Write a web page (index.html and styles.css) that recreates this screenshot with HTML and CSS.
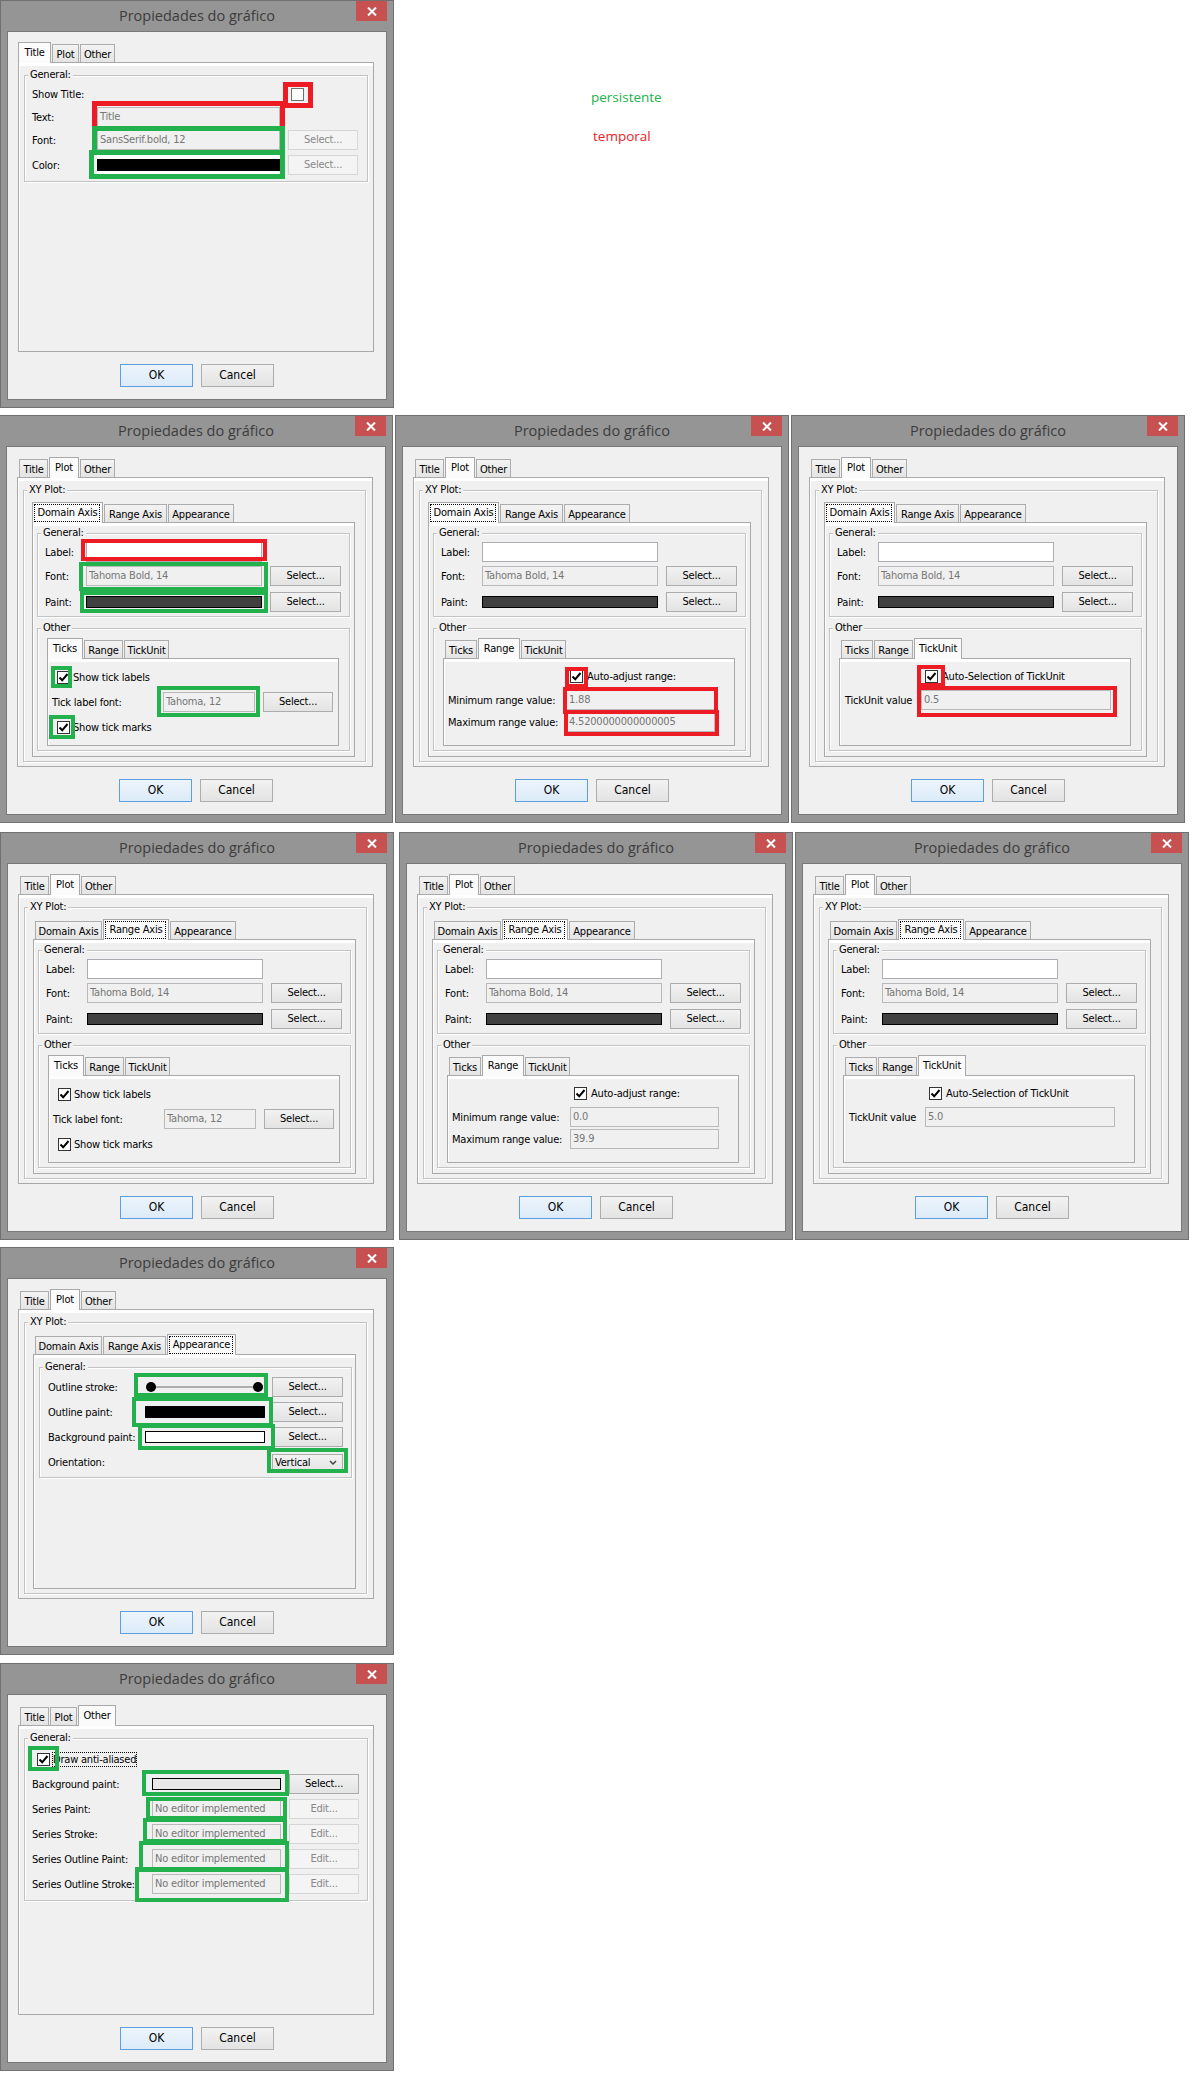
FILE: index.html
```html
<!DOCTYPE html>
<html lang="es">
<head>
<meta charset="utf-8">
<title>Propiedades do gráfico</title>
<link rel="stylesheet" href="styles.css">
</head>
<body>
<div class="page">

<!-- ROW 1 -->
<div class="row">
 <div class="dlg">
  <div class="bar">Propiedades do gráfico</div>
  <div class="close"><svg width="10" height="9" viewBox="0 0 10 9"><path d="M1 0.5L9 8.5M9 0.5L1 8.5" stroke="#fff" stroke-width="2"/></svg></div>
  <div class="client">
   <div class="tabs"><div class="tab w-title sel">Title</div><div class="tab w-plot">Plot</div><div class="tab w-other">Other</div></div>
   <div class="panel">
    <div class="grp g-t"><span class="gt">General:</span>
     <div class="fr mt8"><span class="lb">Show Title:</span><span class="fc"></span><span class="bc"><span class="cb off ml3"></span></span></div>
     <div class="fr h21 mt3"><span class="lb">Text:</span><span class="fc"><span class="tf">Title</span></span></div>
     <div class="fr mt2"><span class="lb">Font:</span><span class="fc"><span class="tf">SansSerif.bold, 12</span></span><span class="bc"><span class="btn dis">Select...</span></span></div>
     <div class="fr mt5"><span class="lb">Color:</span><span class="fc wbg"><span class="sw bk"></span></span><span class="bc"><span class="btn dis">Select...</span></span></div>
    </div>
   </div>
   <div class="btns"><span class="ok">OK</span><span class="cancel">Cancel</span></div>
   <div class="ann red t5 d1a"></div>
   <div class="ann red t5 d1b"></div>
   <div class="ann grn t5 d1c"></div>
   <div class="ann grn t5 d1d"></div>
  </div>
 </div>
 <div class="legend">
  <div class="leg-g">persistente</div>
  <div class="leg-r">temporal</div>
 </div>
</div>

<!-- ROW 2 -->
<div class="row row2">
 <!-- D2 -->
 <div class="dlg">
  <div class="bar">Propiedades do gráfico</div>
  <div class="close"><svg width="10" height="9" viewBox="0 0 10 9"><path d="M1 0.5L9 8.5M9 0.5L1 8.5" stroke="#fff" stroke-width="2"/></svg></div>
  <div class="client">
   <div class="tabs"><div class="tab w-title">Title</div><div class="tab w-plot sel">Plot</div><div class="tab w-other">Other</div></div>
   <div class="panel">
    <div class="grp g-xy"><span class="gt">XY Plot:</span>
     <div class="tabs"><div class="tab w-dom sel focus">Domain Axis</div><div class="tab w-rng">Range Axis</div><div class="tab w-app">Appearance</div></div>
     <div class="ipanel">
      <div class="grp g-gen2"><span class="gt">General:</span>
       <div class="fr mt8"><span class="lb">Label:</span><span class="fc"><span class="tf en"></span></span></div>
       <div class="fr mt4"><span class="lb">Font:</span><span class="fc"><span class="tf">Tahoma Bold, 14</span></span><span class="bc"><span class="btn">Select...</span></span></div>
       <div class="fr mt6"><span class="lb">Paint:</span><span class="fc"><span class="sw dk"></span></span><span class="bc"><span class="btn">Select...</span></span></div>
      </div>
      <div class="grp g-oth"><span class="gt">Other</span>
       <div class="tabs"><div class="tab w-ticks sel">Ticks</div><div class="tab w-range">Range</div><div class="tab w-tu">TickUnit</div></div>
       <div class="spanel sp-ticks">
        <div class="fr mt8"><span class="cb ml5"><svg width="11" height="11" viewBox="0 0 11 11"><path d="M1.5 5.5L4.2 8.3L9.5 2" fill="none" stroke="#000" stroke-width="2"/></svg></span><span class="cbl">Show tick labels</span></div>
        <div class="fr mt5"><span class="lb">Tick label font:</span><span class="fc"><span class="tf">Tahoma, 12</span></span><span class="bc"><span class="btn">Select...</span></span></div>
        <div class="fr mt5"><span class="cb ml5"><svg width="11" height="11" viewBox="0 0 11 11"><path d="M1.5 5.5L4.2 8.3L9.5 2" fill="none" stroke="#000" stroke-width="2"/></svg></span><span class="cbl">Show tick marks</span></div>
       </div>
      </div>
     </div>
    </div>
   </div>
   <div class="btns"><span class="ok">OK</span><span class="cancel">Cancel</span></div>
   <div class="ann red d2a"></div>
   <div class="ann grn d2b"></div>
   <div class="ann grn d2c"></div>
   <div class="ann grn d2d"></div>
   <div class="ann grn d2e"></div>
   <div class="ann grn d2f"></div>
  </div>
 </div>
 <!-- D3 -->
 <div class="dlg">
  <div class="bar">Propiedades do gráfico</div>
  <div class="close"><svg width="10" height="9" viewBox="0 0 10 9"><path d="M1 0.5L9 8.5M9 0.5L1 8.5" stroke="#fff" stroke-width="2"/></svg></div>
  <div class="client">
   <div class="tabs"><div class="tab w-title">Title</div><div class="tab w-plot sel">Plot</div><div class="tab w-other">Other</div></div>
   <div class="panel">
    <div class="grp g-xy"><span class="gt">XY Plot:</span>
     <div class="tabs"><div class="tab w-dom sel focus">Domain Axis</div><div class="tab w-rng">Range Axis</div><div class="tab w-app">Appearance</div></div>
     <div class="ipanel">
      <div class="grp g-gen2"><span class="gt">General:</span>
       <div class="fr mt8"><span class="lb">Label:</span><span class="fc"><span class="tf en"></span></span></div>
       <div class="fr mt4"><span class="lb">Font:</span><span class="fc"><span class="tf">Tahoma Bold, 14</span></span><span class="bc"><span class="btn">Select...</span></span></div>
       <div class="fr mt6"><span class="lb">Paint:</span><span class="fc"><span class="sw dk"></span></span><span class="bc"><span class="btn">Select...</span></span></div>
      </div>
      <div class="grp g-oth"><span class="gt">Other</span>
       <div class="tabs"><div class="tab w-ticks">Ticks</div><div class="tab w-range sel">Range</div><div class="tab w-tu">TickUnit</div></div>
       <div class="spanel sp-range">
        <div class="fr mt7"><span class="lb"></span><span class="cb ml4"><svg width="11" height="11" viewBox="0 0 11 11"><path d="M1.5 5.5L4.2 8.3L9.5 2" fill="none" stroke="#000" stroke-width="2"/></svg></span><span class="cbl ml4">Auto-adjust range:</span></div>
        <div class="fr mt4"><span class="lb">Minimum range value:</span><span class="fc"><span class="tf">1.88</span></span></div>
        <div class="fr mt2"><span class="lb">Maximum range value:</span><span class="fc"><span class="tf">4.5200000000000005</span></span></div>
       </div>
      </div>
     </div>
    </div>
   </div>
   <div class="btns"><span class="ok">OK</span><span class="cancel">Cancel</span></div>
   <div class="ann red d3a"></div>
   <div class="ann red d3b"></div>
   <div class="ann red d3c"></div>
  </div>
 </div>
 <!-- D4 -->
 <div class="dlg">
  <div class="bar">Propiedades do gráfico</div>
  <div class="close"><svg width="10" height="9" viewBox="0 0 10 9"><path d="M1 0.5L9 8.5M9 0.5L1 8.5" stroke="#fff" stroke-width="2"/></svg></div>
  <div class="client">
   <div class="tabs"><div class="tab w-title">Title</div><div class="tab w-plot sel">Plot</div><div class="tab w-other">Other</div></div>
   <div class="panel">
    <div class="grp g-xy"><span class="gt">XY Plot:</span>
     <div class="tabs"><div class="tab w-dom sel focus">Domain Axis</div><div class="tab w-rng">Range Axis</div><div class="tab w-app">Appearance</div></div>
     <div class="ipanel">
      <div class="grp g-gen2"><span class="gt">General:</span>
       <div class="fr mt8"><span class="lb">Label:</span><span class="fc"><span class="tf en"></span></span></div>
       <div class="fr mt4"><span class="lb">Font:</span><span class="fc"><span class="tf">Tahoma Bold, 14</span></span><span class="bc"><span class="btn">Select...</span></span></div>
       <div class="fr mt6"><span class="lb">Paint:</span><span class="fc"><span class="sw dk"></span></span><span class="bc"><span class="btn">Select...</span></span></div>
      </div>
      <div class="grp g-oth"><span class="gt">Other</span>
       <div class="tabs"><div class="tab w-ticks">Ticks</div><div class="tab w-range">Range</div><div class="tab w-tu sel">TickUnit</div></div>
       <div class="spanel sp-tu">
        <div class="fr mt7"><span class="lb"></span><span class="cb ml4"><svg width="11" height="11" viewBox="0 0 11 11"><path d="M1.5 5.5L4.2 8.3L9.5 2" fill="none" stroke="#000" stroke-width="2"/></svg></span><span class="cbl ml4">Auto-Selection of TickUnit</span></div>
        <div class="fr mt4"><span class="lb">TickUnit value</span><span class="fc"><span class="tf">0.5</span></span></div>
       </div>
      </div>
     </div>
    </div>
   </div>
   <div class="btns"><span class="ok">OK</span><span class="cancel">Cancel</span></div>
   <div class="ann red d4a"></div>
   <div class="ann red d4b"></div>
  </div>
 </div>
</div>

<!-- ROW 3 -->
<div class="row row3">
 <!-- D5 -->
 <div class="dlg">
  <div class="bar">Propiedades do gráfico</div>
  <div class="close"><svg width="10" height="9" viewBox="0 0 10 9"><path d="M1 0.5L9 8.5M9 0.5L1 8.5" stroke="#fff" stroke-width="2"/></svg></div>
  <div class="client">
   <div class="tabs"><div class="tab w-title">Title</div><div class="tab w-plot sel">Plot</div><div class="tab w-other">Other</div></div>
   <div class="panel">
    <div class="grp g-xy"><span class="gt">XY Plot:</span>
     <div class="tabs"><div class="tab w-dom">Domain Axis</div><div class="tab w-rng sel focus">Range Axis</div><div class="tab w-app">Appearance</div></div>
     <div class="ipanel">
      <div class="grp g-gen2"><span class="gt">General:</span>
       <div class="fr mt8"><span class="lb">Label:</span><span class="fc"><span class="tf en"></span></span></div>
       <div class="fr mt4"><span class="lb">Font:</span><span class="fc"><span class="tf">Tahoma Bold, 14</span></span><span class="bc"><span class="btn">Select...</span></span></div>
       <div class="fr mt6"><span class="lb">Paint:</span><span class="fc"><span class="sw dk"></span></span><span class="bc"><span class="btn">Select...</span></span></div>
      </div>
      <div class="grp g-oth"><span class="gt">Other</span>
       <div class="tabs"><div class="tab w-ticks sel">Ticks</div><div class="tab w-range">Range</div><div class="tab w-tu">TickUnit</div></div>
       <div class="spanel sp-ticks">
        <div class="fr mt8"><span class="cb ml5"><svg width="11" height="11" viewBox="0 0 11 11"><path d="M1.5 5.5L4.2 8.3L9.5 2" fill="none" stroke="#000" stroke-width="2"/></svg></span><span class="cbl">Show tick labels</span></div>
        <div class="fr mt5"><span class="lb">Tick label font:</span><span class="fc"><span class="tf">Tahoma, 12</span></span><span class="bc"><span class="btn">Select...</span></span></div>
        <div class="fr mt5"><span class="cb ml5"><svg width="11" height="11" viewBox="0 0 11 11"><path d="M1.5 5.5L4.2 8.3L9.5 2" fill="none" stroke="#000" stroke-width="2"/></svg></span><span class="cbl">Show tick marks</span></div>
       </div>
      </div>
     </div>
    </div>
   </div>
   <div class="btns"><span class="ok">OK</span><span class="cancel">Cancel</span></div>
  </div>
 </div>
 <!-- D6 -->
 <div class="dlg ml5">
  <div class="bar">Propiedades do gráfico</div>
  <div class="close"><svg width="10" height="9" viewBox="0 0 10 9"><path d="M1 0.5L9 8.5M9 0.5L1 8.5" stroke="#fff" stroke-width="2"/></svg></div>
  <div class="client">
   <div class="tabs"><div class="tab w-title">Title</div><div class="tab w-plot sel">Plot</div><div class="tab w-other">Other</div></div>
   <div class="panel">
    <div class="grp g-xy"><span class="gt">XY Plot:</span>
     <div class="tabs"><div class="tab w-dom">Domain Axis</div><div class="tab w-rng sel focus">Range Axis</div><div class="tab w-app">Appearance</div></div>
     <div class="ipanel">
      <div class="grp g-gen2"><span class="gt">General:</span>
       <div class="fr mt8"><span class="lb">Label:</span><span class="fc"><span class="tf en"></span></span></div>
       <div class="fr mt4"><span class="lb">Font:</span><span class="fc"><span class="tf">Tahoma Bold, 14</span></span><span class="bc"><span class="btn">Select...</span></span></div>
       <div class="fr mt6"><span class="lb">Paint:</span><span class="fc"><span class="sw dk"></span></span><span class="bc"><span class="btn">Select...</span></span></div>
      </div>
      <div class="grp g-oth"><span class="gt">Other</span>
       <div class="tabs"><div class="tab w-ticks">Ticks</div><div class="tab w-range sel">Range</div><div class="tab w-tu">TickUnit</div></div>
       <div class="spanel sp-range">
        <div class="fr mt7"><span class="lb"></span><span class="cb ml4"><svg width="11" height="11" viewBox="0 0 11 11"><path d="M1.5 5.5L4.2 8.3L9.5 2" fill="none" stroke="#000" stroke-width="2"/></svg></span><span class="cbl ml4">Auto-adjust range:</span></div>
        <div class="fr mt4"><span class="lb">Minimum range value:</span><span class="fc"><span class="tf">0.0</span></span></div>
        <div class="fr mt2"><span class="lb">Maximum range value:</span><span class="fc"><span class="tf">39.9</span></span></div>
       </div>
      </div>
     </div>
    </div>
   </div>
   <div class="btns"><span class="ok">OK</span><span class="cancel">Cancel</span></div>
  </div>
 </div>
 <!-- D7 -->
 <div class="dlg ml2">
  <div class="bar">Propiedades do gráfico</div>
  <div class="close"><svg width="10" height="9" viewBox="0 0 10 9"><path d="M1 0.5L9 8.5M9 0.5L1 8.5" stroke="#fff" stroke-width="2"/></svg></div>
  <div class="client">
   <div class="tabs"><div class="tab w-title">Title</div><div class="tab w-plot sel">Plot</div><div class="tab w-other">Other</div></div>
   <div class="panel">
    <div class="grp g-xy"><span class="gt">XY Plot:</span>
     <div class="tabs"><div class="tab w-dom">Domain Axis</div><div class="tab w-rng sel focus">Range Axis</div><div class="tab w-app">Appearance</div></div>
     <div class="ipanel">
      <div class="grp g-gen2"><span class="gt">General:</span>
       <div class="fr mt8"><span class="lb">Label:</span><span class="fc"><span class="tf en"></span></span></div>
       <div class="fr mt4"><span class="lb">Font:</span><span class="fc"><span class="tf">Tahoma Bold, 14</span></span><span class="bc"><span class="btn">Select...</span></span></div>
       <div class="fr mt6"><span class="lb">Paint:</span><span class="fc"><span class="sw dk"></span></span><span class="bc"><span class="btn">Select...</span></span></div>
      </div>
      <div class="grp g-oth"><span class="gt">Other</span>
       <div class="tabs"><div class="tab w-ticks">Ticks</div><div class="tab w-range">Range</div><div class="tab w-tu sel">TickUnit</div></div>
       <div class="spanel sp-tu">
        <div class="fr mt7"><span class="lb"></span><span class="cb ml4"><svg width="11" height="11" viewBox="0 0 11 11"><path d="M1.5 5.5L4.2 8.3L9.5 2" fill="none" stroke="#000" stroke-width="2"/></svg></span><span class="cbl ml4">Auto-Selection of TickUnit</span></div>
        <div class="fr mt4"><span class="lb">TickUnit value</span><span class="fc"><span class="tf">5.0</span></span></div>
       </div>
      </div>
     </div>
    </div>
   </div>
   <div class="btns"><span class="ok">OK</span><span class="cancel">Cancel</span></div>
  </div>
 </div>
</div>

<!-- ROW 4 -->
<div class="row row4">
 <div class="dlg">
  <div class="bar">Propiedades do gráfico</div>
  <div class="close"><svg width="10" height="9" viewBox="0 0 10 9"><path d="M1 0.5L9 8.5M9 0.5L1 8.5" stroke="#fff" stroke-width="2"/></svg></div>
  <div class="client">
   <div class="tabs"><div class="tab w-title">Title</div><div class="tab w-plot sel">Plot</div><div class="tab w-other">Other</div></div>
   <div class="panel">
    <div class="grp g-xy"><span class="gt">XY Plot:</span>
     <div class="tabs"><div class="tab w-dom">Domain Axis</div><div class="tab w-rng">Range Axis</div><div class="tab w-app sel focus">Appearance</div></div>
     <div class="ipanel">
      <div class="grp g-app"><span class="gt">General:</span>
       <div class="fr mt9"><span class="lb">Outline stroke:</span><span class="fc"><svg class="stroke" width="126" height="20" viewBox="0 0 126 20"><line x1="12" y1="10" x2="119" y2="10" stroke="#6a6a6a" stroke-width="1"/><circle cx="12" cy="10" r="5" fill="#000"/><circle cx="119" cy="10" r="5" fill="#000"/></svg></span><span class="bc"><span class="btn">Select...</span></span></div>
       <div class="fr mt5"><span class="lb">Outline paint:</span><span class="fc"><span class="sw bk w120"></span></span><span class="bc"><span class="btn">Select...</span></span></div>
       <div class="fr mt5"><span class="lb">Background paint:</span><span class="fc"><span class="sw wh w120"></span></span><span class="bc"><span class="btn">Select...</span></span></div>
       <div class="fr mt5"><span class="lb">Orientation:</span><span class="fc"></span><span class="bc"><span class="combo">Vertical<svg width="8" height="5" viewBox="0 0 8 5"><path d="M1 1l3 3 3-3" fill="none" stroke="#444" stroke-width="1.5"/></svg></span></span></div>
      </div>
     </div>
    </div>
   </div>
   <div class="btns"><span class="ok">OK</span><span class="cancel">Cancel</span></div>
   <div class="ann grn d8a"></div>
   <div class="ann grn d8b"></div>
   <div class="ann grn d8c"></div>
   <div class="ann grn d8d"></div>
  </div>
 </div>
</div>

<!-- ROW 5 -->
<div class="row row5">
 <div class="dlg">
  <div class="bar">Propiedades do gráfico</div>
  <div class="close"><svg width="10" height="9" viewBox="0 0 10 9"><path d="M1 0.5L9 8.5M9 0.5L1 8.5" stroke="#fff" stroke-width="2"/></svg></div>
  <div class="client">
   <div class="tabs"><div class="tab w-title">Title</div><div class="tab w-plot">Plot</div><div class="tab w-other sel">Other</div></div>
   <div class="panel">
    <div class="grp g-o"><span class="gt">General:</span>
     <div class="fr mt10"><span class="cb ml5"><svg width="11" height="11" viewBox="0 0 11 11"><path d="M1.5 5.5L4.2 8.3L9.5 2" fill="none" stroke="#000" stroke-width="2"/></svg></span><span class="cbl"><span class="focusr">Draw anti-aliased</span></span></div>
     <div class="fr mt5"><span class="lb">Background paint:</span><span class="fc"><span class="sw lg"></span></span><span class="bc"><span class="btn">Select...</span></span></div>
     <div class="fr mt5"><span class="lb">Series Paint:</span><span class="fc"><span class="tf">No editor implemented</span></span><span class="bc"><span class="btn dis">Edit...</span></span></div>
     <div class="fr mt5"><span class="lb">Series Stroke:</span><span class="fc"><span class="tf">No editor implemented</span></span><span class="bc"><span class="btn dis">Edit...</span></span></div>
     <div class="fr mt5"><span class="lb">Series Outline Paint:</span><span class="fc"><span class="tf">No editor implemented</span></span><span class="bc"><span class="btn dis">Edit...</span></span></div>
     <div class="fr mt5"><span class="lb">Series Outline Stroke:</span><span class="fc"><span class="tf">No editor implemented</span></span><span class="bc"><span class="btn dis">Edit...</span></span></div>
    </div>
   </div>
   <div class="btns"><span class="ok">OK</span><span class="cancel">Cancel</span></div>
   <div class="ann grn d9a"></div>
   <div class="ann grn d9b"></div>
   <div class="ann grn d9c"></div>
   <div class="ann grn d9d"></div>
   <div class="ann grn d9e"></div>
   <div class="ann grn d9f"></div>
  </div>
 </div>
</div>

</div>
</body>
</html>
```

FILE: styles.css
```css
* { box-sizing: border-box; }
html, body { margin: 0; padding: 0; background: #fff; }
body {
  width: 1192px;
  height: 2080px;
  overflow: hidden;
  font-family: "DejaVu Sans Condensed", "Liberation Sans", Arial, sans-serif;
  font-size: 11px;
  letter-spacing: -0.2px;
  color: #000;
}
.page { display: flex; flex-direction: column; }
.row { display: flex; align-items: flex-start; }
.row2 { margin-top: 7px; margin-left: -1px; gap: 2px; }
.row3 { margin-top: 9px; }
.row4 { margin-top: 7px; }
.row5 { margin-top: 8px; }
.ml5 { margin-left: 5px; }
.ml2 { margin-left: 2px; }
.ml3 { margin-left: 3px; }
.ml4 { margin-left: 4px; }

/* legend */
.legend {
  margin-left: 197px;
  padding-top: 88px;
  font-family: "Open Sans", "Noto Sans", sans-serif;
  font-size: 13.5px;
  letter-spacing: 0;
  line-height: 18px;
}
.leg-g { color: #22b14c; }
.leg-r { color: #ed1c24; margin-top: 21px; margin-left: 2px; }

/* window frame */
.dlg {
  position: relative;
  flex: none;
  width: 394px;
  height: 408px;
  background: #959595;
  border: 1px solid #707070;
  padding: 0 6px;
}
.bar {
  height: 30px;
  line-height: 30px;
  text-align: center;
  font-family: "Open Sans", "Noto Sans", sans-serif;
  font-size: 14.5px;
  letter-spacing: 0;
  color: #3c3c3c;
  white-space: nowrap;
}
.close {
  position: absolute;
  top: 0;
  right: 6px;
  width: 31px;
  height: 20px;
  background: #c75050;
  display: flex;
  align-items: center;
  justify-content: center;
}
.client {
  position: relative;
  width: 380px;
  height: 369px;
  background: #f0f0f0;
  border: 1px solid #787878;
  padding: 10px 0 0 10px;
}

/* tabs */
.tabs {
  position: relative;
  z-index: 1;
  display: flex;
  align-items: flex-end;
  height: 20px;
  padding-left: 2px;
}
.tab {
  flex: none;
  width: var(--w);
  height: 18px;
  border: 1px solid #acacac;
  border-bottom: 0;
  background: linear-gradient(#f3f3f3, #e4e4e4);
  margin-right: 1px;
  padding-top: 1px;
  line-height: 17px;
  text-align: center;
  white-space: nowrap;
}
.tab.sel {
  position: relative;
  width: calc(var(--w) + 3px);
  height: 21px;
  margin-bottom: -1px;
  background: #fbfbfb;
  border-color: #a8a8a8;
}
.tab.sel:first-child { margin-left: -2px; width: calc(var(--w) + 4px); }
.tab.focus::after {
  content: "";
  position: absolute;
  left: 1px; right: 2px; top: 1px; bottom: 1px;
  border: 1px dotted #000;
}
.w-title { --w: 29px; }
.w-plot { --w: 27px; }
.w-other { --w: 35px; }
.w-dom { --w: 67px; }
.w-rng { --w: 63px; }
.w-app { --w: 66px; }
.w-ticks { --w: 32px; }
.w-range { --w: 39px; }
.w-tu { --w: 45px; }

/* tab panels */
.panel, .ipanel, .spanel {
  position: relative;
  border: 1px solid #a9a9a9;
  background: #f0f0f0;
  box-shadow: inset 1px 3px 0 #fff;
}
.panel { width: 356px; height: 290px; }
.ipanel { width: 323px; height: 235px; }
.spanel { width: 292px; height: 88px; }

/* titled groups */
.grp {
  position: relative;
  flex: none;
  border: 1px solid #c3c3c3;
  box-shadow: 1px 1px 0 #fff, inset 1px 1px 0 #fff;
}
.gt {
  position: absolute;
  left: 3px;
  top: -8px;
  padding: 0 2px;
  line-height: 14px;
  background: #f0f0f0;
  white-space: nowrap;
}
.g-t { margin: 12px 0 0 5px; width: 344px; height: 107px; padding-left: 7px; --lw: 65px; --fw: 183px; --gap: 8px; --bw: 70px; }
.g-o { margin: 12px 0 0 5px; width: 344px; height: 163px; padding-left: 7px; --lw: 120px; --fw: 129px; --gap: 8px; --bw: 70px; }
.g-xy { margin: 12px 0 0 5px; width: 343px; height: 272px; padding: 11px 0 0 8px; }
.g-gen2 { margin: 10px 0 0 4px; width: 313px; height: 84px; padding-left: 7px; --lw: 41px; --fw: 176px; --gap: 8px; --bw: 71px; }
.g-oth { margin: 11px 0 0 4px; width: 313px; height: 123px; padding: 9px 0 0 9px; }
.g-app { margin: 12px 0 0 5px; width: 313px; height: 111px; padding-left: 8px; --lw: 91px; --fw: 126px; --gap: 7px; --bw: 71px; }
.sp-ticks { padding-left: 4px; --lw: 111px; --fw: 92px; --gap: 8px; --bw: 70px; }
.sp-range { padding-left: 4px; --lw: 118px; --fw: 149px; --gap: 8px; --bw: 70px; }
.sp-tu { padding-left: 5px; --lw: 76px; --fw: 190px; --gap: 8px; --bw: 70px; }

/* form rows */
.fr { display: flex; align-items: center; height: 20px; }
.h21 { height: 21px; }
.mt2 { margin-top: 2px; }
.mt3 { margin-top: 3px; }
.mt4 { margin-top: 4px; }
.mt5 { margin-top: 5px; }
.mt6 { margin-top: 6px; }
.mt7 { margin-top: 7px; }
.mt8 { margin-top: 8px; }
.mt9 { margin-top: 9px; }
.mt10 { margin-top: 10px; }
.lb { flex: none; width: var(--lw); white-space: nowrap; }
.fc { flex: none; width: var(--fw); height: 100%; display: flex; align-items: center; }
.fc.wbg { background: #fff; }
.bc { flex: none; width: var(--bw); margin-left: var(--gap); height: 100%; display: flex; align-items: center; }

.tf {
  display: block;
  width: 100%;
  height: 100%;
  border: 1px solid #b9b9b9;
  background: #f0f0f0;
  color: #767676;
  padding-left: 2px;
  line-height: 18px;
  white-space: nowrap;
  overflow: hidden;
}
.tf.en { background: #fff; border-color: #abadb3; }
.sw { display: block; width: 100%; height: 12px; border: 1px solid #000; }
.sw.bk { background: #000; }
.sw.dk { background: #404040; }
.sw.wh { background: #fff; }
.sw.lg { background: #e8e8e8; }
.sw.w120 { width: 120px; margin-left: 6px; }
.stroke { display: block; }

.btn {
  display: block;
  width: 100%;
  height: 20px;
  border: 1px solid #acacac;
  background: linear-gradient(#f2f2f2, #e3e3e3);
  text-align: center;
  line-height: 18px;
  white-space: nowrap;
}
.btn.dis { border-color: #d6d6d6; background: #f4f4f4; color: #888; }

.combo {
  display: flex;
  align-items: center;
  justify-content: space-between;
  width: 71px;
  height: 17px;
  border: 1px solid #acacac;
  background: linear-gradient(#f2f2f2, #e5e5e5);
  padding: 0 5px 0 2px;
}

.cb {
  flex: none;
  width: 13px;
  height: 13px;
  border: 1px solid #333;
  background: #fff;
  display: flex;
  align-items: center;
  justify-content: center;
}
.cb.off { border-color: #707070; }
.ml5.cb { margin-left: 5px; }
.cbl { margin-left: 3px; white-space: nowrap; }
.cbl.ml4 { margin-left: 4px; }
.focusr { outline: 1px dotted #000; outline-offset: 0; }

/* dialog buttons */
.btns {
  display: flex;
  justify-content: center;
  gap: 8px;
  width: 378px;
  margin-left: -10px;
  margin-top: 12px;
}
.ok, .cancel {
  width: 73px;
  height: 23px;
  line-height: 21px;
  text-align: center;
  font-size: 12px;
  letter-spacing: 0;
}
.ok { border: 1px solid #5c9fe0; background: linear-gradient(#ecf4fc, #dcebf9); }
.cancel { border: 1px solid #adadad; background: linear-gradient(#f2f2f2, #e3e3e3); }

/* annotation boxes drawn over the screenshots */
.ann { position: absolute; z-index: 5; border: 4px solid; pointer-events: none; }
.ann.t5 { border-width: 5px; }
.red { border-color: #ed1c24; }
.grn { border-color: #22b14c; }

.d1a { left: 275px; top: 50px; width: 30px; height: 26px; }
.d1b { left: 84px; top: 69px; width: 193px; height: 30px; }
.d1c { left: 84px; top: 94px; width: 193px; height: 29px; }
.d1d { left: 81px; top: 118px; width: 196px; height: 29px; }

.d2a { left: 74px; top: 92px; width: 186px; height: 22px; }
.d2b { left: 72px; top: 115px; width: 189px; height: 29px; }
.d2c { left: 73px; top: 144px; width: 188px; height: 22px; }
.d2d { left: 44px; top: 219px; width: 21px; height: 22px; }
.d2e { left: 150px; top: 239px; width: 103px; height: 31px; }
.d2f { left: 42px; top: 268px; width: 26px; height: 24px; }

.d3a { left: 162px; top: 220px; width: 23px; height: 21px; }
.d3b { left: 160px; top: 240px; width: 155px; height: 27px; }
.d3c { left: 161px; top: 263px; width: 155px; height: 26px; }

.d4a { left: 118px; top: 218px; width: 28px; height: 22px; }
.d4b { left: 118px; top: 239px; width: 200px; height: 31px; }

.d8a { left: 126px; top: 94px; width: 134px; height: 24px; }
.d8b { left: 124px; top: 118px; width: 141px; height: 30px; }
.d8c { left: 130px; top: 145px; width: 137px; height: 26px; }
.d8d { left: 259px; top: 169px; width: 81px; height: 25px; }

.d9a { left: 20px; top: 51px; width: 31px; height: 25px; }
.d9b { left: 134px; top: 75px; width: 147px; height: 26px; }
.d9c { left: 138px; top: 102px; width: 141px; height: 23px; }
.d9d { left: 135px; top: 123px; width: 144px; height: 25px; }
.d9e { left: 131px; top: 146px; width: 150px; height: 31px; }
.d9f { left: 127px; top: 172px; width: 154px; height: 35px; }
```
